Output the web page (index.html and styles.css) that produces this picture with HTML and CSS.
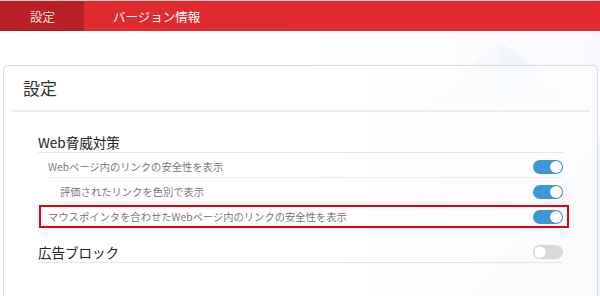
FILE: index.html
```html
<!DOCTYPE html>
<html lang="ja">
<head>
  <meta charset="UTF-8">
  <meta name="viewport" content="width=device-width, initial-scale=1.0">
  <title>設定</title>
  <link rel="stylesheet" href="styles.css">
</head>
<body>
  <svg class="backdrop" width="600" height="296" viewBox="0 0 600 296">
    <polygon points="500,42 420,110 580,110" fill="#f5f7fc"/>
    <polygon points="500,42 540,70 500,110" fill="#f0f5fc"/>
    <polygon points="600,20 600,296 470,296" fill="#f7f9fc"/>
    <polygon points="470,296 600,140 600,296" fill="#f3f6fa"/>
  </svg>

  <div class="tabs">
    <div class="tab active">設定</div>
    <div class="tab">バージョン情報</div>
  </div>

  <div class="card">
    <div class="card-title">設定</div>

    <div class="section">
      <div class="section-head">
        <span>Web脅威対策</span>
      </div>
      <div class="row">
        <span>Webページ内のリンクの安全性を表示</span>
        <span class="toggle on"></span>
      </div>
      <div class="row sub">
        <span>評価されたリンクを色別で表示</span>
        <span class="toggle on"></span>
      </div>
      <div class="row marked">
        <span>マウスポインタを合わせたWebページ内のリンクの安全性を表示</span>
        <span class="toggle on"></span>
      </div>
    </div>

    <div class="section">
      <div class="section-head ads">
        <span>広告ブロック</span>
        <span class="toggle"></span>
      </div>
    </div>
  </div>
</body>
</html>
```

FILE: styles.css
```css
body {
  margin: 0;
  font-family: "Noto Sans CJK JP", "Noto Sans", sans-serif;
  font-weight: 350;
  background: linear-gradient(to right, #ffffff 45%, #f7f9fc);
  height: 296px;
  overflow: hidden;
}

/* faint triangles behind the card */
.backdrop {
  position: absolute;
  top: 0;
  left: 0;
  z-index: -1;
}

.tabs {
  display: flex;
  height: 30px;
  background-color: #e12b31;
  border-top: 1px solid #cfcfcf;
}

.tab {
  display: flex;
  align-items: center;
  padding: 0 29px;
  font-size: 12.5px;
  font-weight: 400;
  color: #fff;
}

.tab.active {
  width: 25px;
  background-color: #b92026;
  color: #f1dede;
  padding: 0 29px 0 30px;
}

.card {
  margin: 34px 2px 0 3px;
  height: 240px;
  background-color: rgba(255, 255, 255, 0.55);
  border: 1px solid #dcdcdc;
  border-radius: 5px 5px 0 0;
}

.card-title {
  margin: 0 7px 0 8px;
  height: 44px;
  line-height: 43px;
  padding-left: 11px;
  font-size: 17px;
  font-weight: 400;
  color: #333;
  border-bottom: 2px solid #ececec;
}

.section {
  margin: 0 34px;
}

.section-head {
  display: flex;
  justify-content: space-between;
  align-items: center;
  padding-top: 20px;
  line-height: 20px;
  font-size: 13.5px;
  font-weight: 400;
  color: #222;
  border-bottom: 1px solid #e6e6e6;
}

.section-head.ads {
  padding-top: 14px;
}

.row {
  position: relative;
  display: flex;
  justify-content: space-between;
  align-items: center;
  margin-left: 10px;
  padding-top: 4px;
  line-height: 20px;
  font-size: 10.3px;
  color: #6c6c6c;
  border-bottom: 1px solid #ececec;
}

.row.sub span:first-child {
  padding-left: 12px;
}

.row.marked {
  border-bottom-color: transparent;
}

/* red highlight box around the third option */
.row.marked::after {
  content: "";
  position: absolute;
  top: 2px;
  bottom: -1px;
  left: -9px;
  right: -6px;
  border: 2px solid #e50012;
}

.toggle {
  position: relative;
  width: 30px;
  height: 14px;
  border-radius: 7px;
  background-color: #d9d9d9;
}

.toggle::before {
  content: "";
  position: absolute;
  top: 1px;
  left: 1px;
  width: 12px;
  height: 12px;
  border-radius: 50%;
  background-color: #fff;
  box-shadow: 0 0 1px rgba(0, 0, 0, 0.3);
}

.toggle.on {
  background-color: #3a98d6;
}

.toggle.on::before {
  left: 17px;
}
```
